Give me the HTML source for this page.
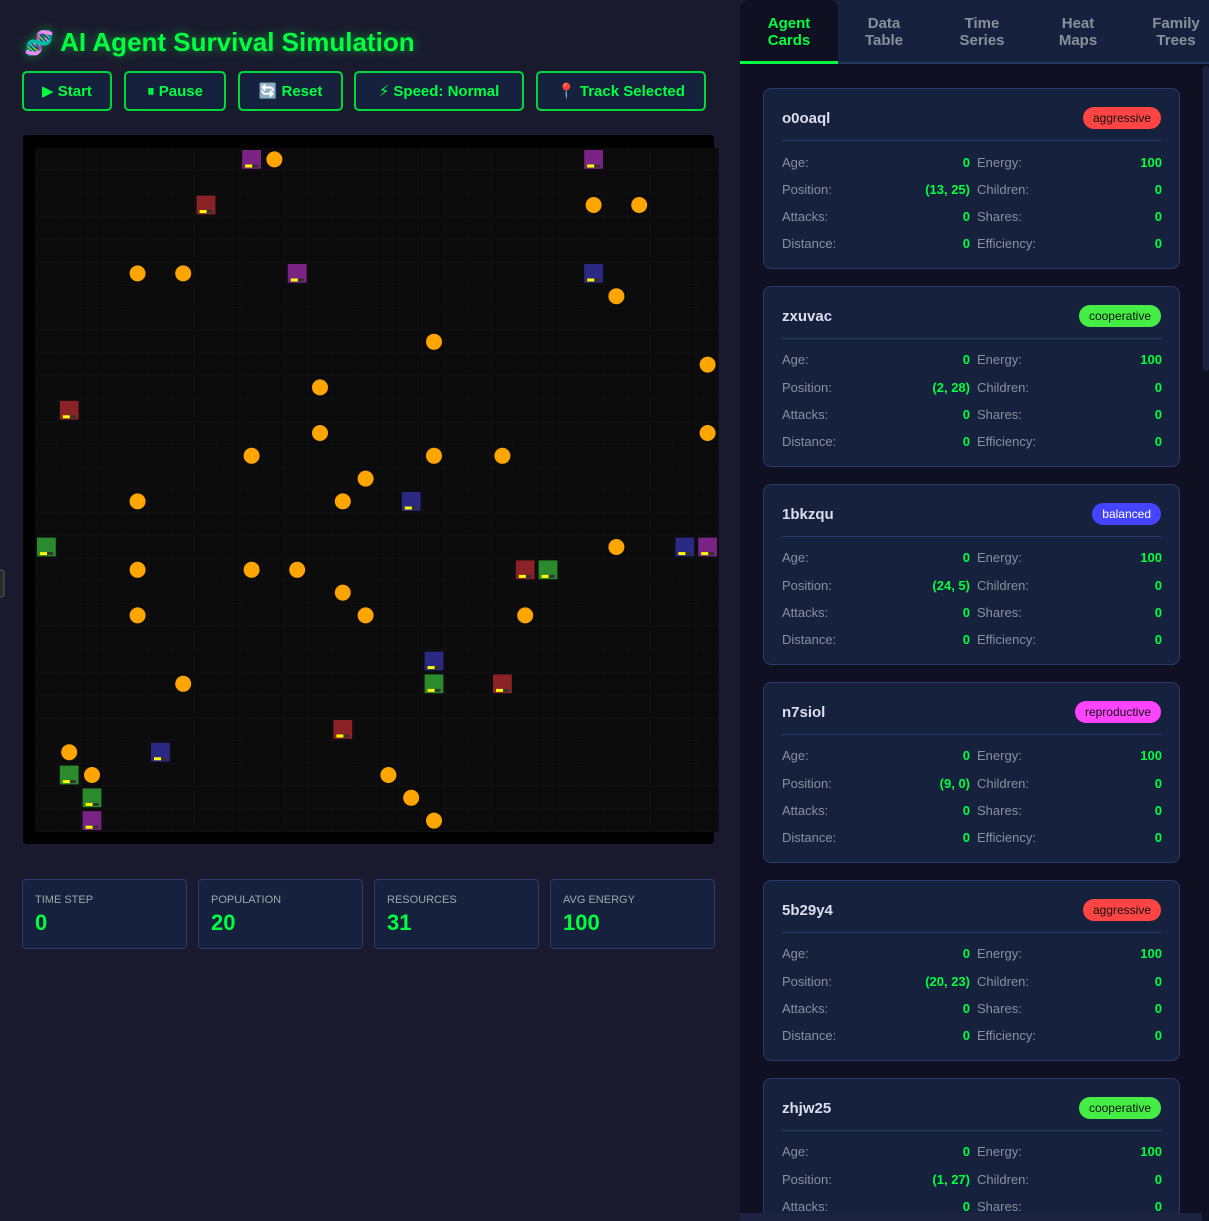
<!DOCTYPE html>
<html><head><meta charset="utf-8"><style>
*{box-sizing:border-box;margin:0;padding:0}
body{width:1209px;height:1221px;overflow:hidden;background:#1a1a2e;font-family:"Liberation Sans","DejaVu Sans",sans-serif;position:relative}
h1{position:absolute;left:24px;top:27px;font-size:26px;color:#00ff41;font-weight:bold;text-shadow:0 0 10px rgba(0,255,65,.5)}
.btn{position:absolute;top:71px;height:40px;border:2px solid #00d83a;border-radius:5px;background:#16213e;color:#00ff41;font-weight:bold;font-size:15px;display:flex;align-items:center;justify-content:center;gap:8px}
.canvas{position:absolute;left:23px;top:135px;width:691px;height:709px;background:#000;border-radius:4px}
svg.grid{position:absolute;left:0;top:0}
.stat{position:absolute;top:879px;height:70px;width:165px;background:#16213e;border:1px solid #2a3a6a;border-radius:4px;padding:14px 12px}
.stat .l{font-size:11px;color:#9aa;text-transform:uppercase}
.stat .v{font-size:22px;color:#00ff41;font-weight:bold;margin-top:4px}
.side{position:absolute;left:740px;top:0;width:469px;height:1221px;background:#0f1022;overflow:hidden}
.tabs{position:absolute;left:0;top:0;width:469px;height:64px;background:#16213e;border-bottom:2px solid #233660}
.tab{position:absolute;top:15px;text-align:center;font-size:15px;font-weight:bold;color:#8a8f9c;line-height:17px}
.tab.act{color:#00ff41;background:#0f1022;top:0;height:64px;padding-top:15px;width:98px;left:0;border-radius:8px 8px 0 0;border-bottom:3px solid #00ff41}
.card{position:absolute;left:23px;width:417px;height:181px;background:#16213e;border:1px solid #2a3a6a;border-radius:8px;padding:0 18px}
.card .nm{position:absolute;left:18px;top:21px;font-size:15px;font-weight:bold;color:#dde}
.badge{position:absolute;right:18px;top:18px;height:22px;border-radius:11px;padding:0 10px;font-size:12px;line-height:22px}
.card hr{position:absolute;left:18px;right:18px;top:51px;border:0;border-top:1px solid #2a3a6a}
.row{position:absolute;left:18px;width:380px;font-size:13px;color:#8a8f9c}
.row span{position:absolute}
.g{color:#00ff41;font-weight:bold}
</style></head><body>
<h1><span style="font-size:24px">🧬</span> AI Agent Survival Simulation</h1>
<div class="btn" style="left:22px;width:90px">▶ Start</div>
<div class="btn" style="left:124px;width:102px">⏸ Pause</div>
<div class="btn" style="left:238px;width:105px">🔄 Reset</div>
<div class="btn" style="left:354px;width:170px">⚡ Speed: Normal</div>
<div class="btn" style="left:536px;width:170px">📍 Track Selected</div>
<div class="canvas"></div>
<svg class="grid" width="740" height="850">
<defs><pattern id="p" x="35" y="148" width="22.8" height="22.8" patternUnits="userSpaceOnUse"><rect width="22.8" height="22.8" fill="#0b0b0b"/><path d="M22.8 0V22.8H0" fill="none" stroke="#15151d" stroke-width="1"/></pattern>
<g id="bar"><rect x="3" y="14.5" width="13" height="3" fill="#333"/><rect x="3" y="14.5" width="7" height="3" fill="#ff0"/></g></defs>
<rect x="35" y="148" width="684" height="684" fill="url(#p)"/>
<g fill="#ffa500">
<circle cx="274.4" cy="159.4" r="8"/><circle cx="593.6" cy="205" r="8"/><circle cx="639.2" cy="205" r="8"/><circle cx="137.6" cy="273.4" r="8"/><circle cx="183.2" cy="273.4" r="8"/><circle cx="616.4" cy="296.2" r="8"/><circle cx="434" cy="341.8" r="8"/><circle cx="707.6" cy="364.6" r="8"/><circle cx="320" cy="387.4" r="8"/><circle cx="320" cy="433" r="8"/><circle cx="707.6" cy="433" r="8"/><circle cx="251.6" cy="455.8" r="8"/><circle cx="434" cy="455.8" r="8"/><circle cx="502.4" cy="455.8" r="8"/><circle cx="365.6" cy="478.6" r="8"/><circle cx="137.6" cy="501.4" r="8"/><circle cx="342.8" cy="501.4" r="8"/><circle cx="616.4" cy="547" r="8"/><circle cx="137.6" cy="569.8" r="8"/><circle cx="251.6" cy="569.8" r="8"/><circle cx="297.2" cy="569.8" r="8"/><circle cx="342.8" cy="592.6" r="8"/><circle cx="137.6" cy="615.4" r="8"/><circle cx="365.6" cy="615.4" r="8"/><circle cx="525.2" cy="615.4" r="8"/><circle cx="183.2" cy="683.8" r="8"/><circle cx="69.2" cy="752.2" r="8"/><circle cx="92" cy="775" r="8"/><circle cx="388.4" cy="775" r="8"/><circle cx="411.2" cy="797.8" r="8"/><circle cx="434" cy="820.6" r="8"/>
</g>
<g>
<g transform="translate(242.2,150)"><rect width="18.8" height="18.8" fill="#7b2384"/><use href="#bar"/></g>
<g transform="translate(584.2,150)"><rect width="18.8" height="18.8" fill="#7b2384"/><use href="#bar"/></g>
<g transform="translate(196.6,195.6)"><rect width="18.8" height="18.8" fill="#8b2326"/><use href="#bar"/></g>
<g transform="translate(287.8,264)"><rect width="18.8" height="18.8" fill="#7b2384"/><use href="#bar"/></g>
<g transform="translate(584.2,264)"><rect width="18.8" height="18.8" fill="#2a2a85"/><use href="#bar"/></g>
<g transform="translate(59.8,400.8)"><rect width="18.8" height="18.8" fill="#8b2326"/><use href="#bar"/></g>
<g transform="translate(401.8,492)"><rect width="18.8" height="18.8" fill="#2a2a85"/><use href="#bar"/></g>
<g transform="translate(37,537.6)"><rect width="18.8" height="18.8" fill="#2b8a2b"/><use href="#bar"/></g>
<g transform="translate(675.4,537.6)"><rect width="18.8" height="18.8" fill="#2a2a85"/><use href="#bar"/></g>
<g transform="translate(698.2,537.6)"><rect width="18.8" height="18.8" fill="#7b2384"/><use href="#bar"/></g>
<g transform="translate(515.8,560.4)"><rect width="18.8" height="18.8" fill="#8b2326"/><use href="#bar"/></g>
<g transform="translate(538.6,560.4)"><rect width="18.8" height="18.8" fill="#2b8a2b"/><use href="#bar"/></g>
<g transform="translate(424.6,651.6)"><rect width="18.8" height="18.8" fill="#2a2a85"/><use href="#bar"/></g>
<g transform="translate(424.6,674.4)"><rect width="18.8" height="18.8" fill="#2b8a2b"/><use href="#bar"/></g>
<g transform="translate(493,674.4)"><rect width="18.8" height="18.8" fill="#8b2326"/><use href="#bar"/></g>
<g transform="translate(333.4,720)"><rect width="18.8" height="18.8" fill="#8b2326"/><use href="#bar"/></g>
<g transform="translate(151,742.8)"><rect width="18.8" height="18.8" fill="#2a2a85"/><use href="#bar"/></g>
<g transform="translate(59.8,765.6)"><rect width="18.8" height="18.8" fill="#2b8a2b"/><use href="#bar"/></g>
<g transform="translate(82.6,788.4)"><rect width="18.8" height="18.8" fill="#2b8a2b"/><use href="#bar"/></g>
<g transform="translate(82.6,811.2)"><rect width="18.8" height="18.8" fill="#7b2384"/><use href="#bar"/></g>
</g>
<rect x="-4" y="570" width="8" height="27" rx="3" fill="#2a2a2a" stroke="#555"/>
</svg>
<div class="stat" style="left:22px"><div class="l">Time Step</div><div class="v">0</div></div>
<div class="stat" style="left:198px"><div class="l">Population</div><div class="v">20</div></div>
<div class="stat" style="left:374px"><div class="l">Resources</div><div class="v">31</div></div>
<div class="stat" style="left:550px"><div class="l">Avg Energy</div><div class="v">100</div></div>

<div class="side">
<div class="tabs">
<div class="tab act">Agent<br>Cards</div>
<div class="tab" style="left:118px;width:52px">Data<br>Table</div>
<div class="tab" style="left:214px;width:56px">Time<br>Series</div>
<div class="tab" style="left:312px;width:52px">Heat<br>Maps</div>
<div class="tab" style="left:408px;width:56px">Family<br>Trees</div>
</div>
<div style="position:absolute;left:463px;top:66px;width:6px;height:305px;background:#1c2340;border-radius:3px"></div>

<div class="card" style="top:88px"><div class="nm">o0oaql</div><div class="badge" style="background:#ff4444;color:#111">aggressive</div><hr>
<div class="row" style="top:66px"><span style="left:0">Age:</span><span class="g" style="right:192px">0</span><span style="left:195px">Energy:</span><span class="g" style="right:0">100</span></div>
<div class="row" style="top:93px"><span style="left:0">Position:</span><span class="g" style="right:192px">(13, 25)</span><span style="left:195px">Children:</span><span class="g" style="right:0">0</span></div>
<div class="row" style="top:120px"><span style="left:0">Attacks:</span><span class="g" style="right:192px">0</span><span style="left:195px">Shares:</span><span class="g" style="right:0">0</span></div>
<div class="row" style="top:147px"><span style="left:0">Distance:</span><span class="g" style="right:192px">0</span><span style="left:195px">Efficiency:</span><span class="g" style="right:0">0</span></div></div>

<div class="card" style="top:286px"><div class="nm">zxuvac</div><div class="badge" style="background:#44ee44;color:#111">cooperative</div><hr>
<div class="row" style="top:65px"><span style="left:0">Age:</span><span class="g" style="right:192px">0</span><span style="left:195px">Energy:</span><span class="g" style="right:0">100</span></div>
<div class="row" style="top:93px"><span style="left:0">Position:</span><span class="g" style="right:192px">(2, 28)</span><span style="left:195px">Children:</span><span class="g" style="right:0">0</span></div>
<div class="row" style="top:120px"><span style="left:0">Attacks:</span><span class="g" style="right:192px">0</span><span style="left:195px">Shares:</span><span class="g" style="right:0">0</span></div>
<div class="row" style="top:147px"><span style="left:0">Distance:</span><span class="g" style="right:192px">0</span><span style="left:195px">Efficiency:</span><span class="g" style="right:0">0</span></div></div>

<div class="card" style="top:484px"><div class="nm">1bkzqu</div><div class="badge" style="background:#4444ff;color:#fff">balanced</div><hr>
<div class="row" style="top:65px"><span style="left:0">Age:</span><span class="g" style="right:192px">0</span><span style="left:195px">Energy:</span><span class="g" style="right:0">100</span></div>
<div class="row" style="top:93px"><span style="left:0">Position:</span><span class="g" style="right:192px">(24, 5)</span><span style="left:195px">Children:</span><span class="g" style="right:0">0</span></div>
<div class="row" style="top:120px"><span style="left:0">Attacks:</span><span class="g" style="right:192px">0</span><span style="left:195px">Shares:</span><span class="g" style="right:0">0</span></div>
<div class="row" style="top:147px"><span style="left:0">Distance:</span><span class="g" style="right:192px">0</span><span style="left:195px">Efficiency:</span><span class="g" style="right:0">0</span></div></div>

<div class="card" style="top:682px"><div class="nm">n7siol</div><div class="badge" style="background:#ff44ff;color:#111">reproductive</div><hr>
<div class="row" style="top:65px"><span style="left:0">Age:</span><span class="g" style="right:192px">0</span><span style="left:195px">Energy:</span><span class="g" style="right:0">100</span></div>
<div class="row" style="top:93px"><span style="left:0">Position:</span><span class="g" style="right:192px">(9, 0)</span><span style="left:195px">Children:</span><span class="g" style="right:0">0</span></div>
<div class="row" style="top:120px"><span style="left:0">Attacks:</span><span class="g" style="right:192px">0</span><span style="left:195px">Shares:</span><span class="g" style="right:0">0</span></div>
<div class="row" style="top:147px"><span style="left:0">Distance:</span><span class="g" style="right:192px">0</span><span style="left:195px">Efficiency:</span><span class="g" style="right:0">0</span></div></div>

<div class="card" style="top:880px"><div class="nm">5b29y4</div><div class="badge" style="background:#ff4444;color:#111">aggressive</div><hr>
<div class="row" style="top:65px"><span style="left:0">Age:</span><span class="g" style="right:192px">0</span><span style="left:195px">Energy:</span><span class="g" style="right:0">100</span></div>
<div class="row" style="top:93px"><span style="left:0">Position:</span><span class="g" style="right:192px">(20, 23)</span><span style="left:195px">Children:</span><span class="g" style="right:0">0</span></div>
<div class="row" style="top:120px"><span style="left:0">Attacks:</span><span class="g" style="right:192px">0</span><span style="left:195px">Shares:</span><span class="g" style="right:0">0</span></div>
<div class="row" style="top:147px"><span style="left:0">Distance:</span><span class="g" style="right:192px">0</span><span style="left:195px">Efficiency:</span><span class="g" style="right:0">0</span></div></div>

<div class="card" style="top:1078px;height:181px"><div class="nm">zhjw25</div><div class="badge" style="background:#44ee44;color:#111">cooperative</div><hr>
<div class="row" style="top:65px"><span style="left:0">Age:</span><span class="g" style="right:192px">0</span><span style="left:195px">Energy:</span><span class="g" style="right:0">100</span></div>
<div class="row" style="top:93px"><span style="left:0">Position:</span><span class="g" style="right:192px">(1, 27)</span><span style="left:195px">Children:</span><span class="g" style="right:0">0</span></div>
<div class="row" style="top:120px"><span style="left:0">Attacks:</span><span class="g" style="right:192px">0</span><span style="left:195px">Shares:</span><span class="g" style="right:0">0</span></div></div>
<div style="position:absolute;left:0;top:1213px;width:462px;height:8px;background:#1c2340"></div>
</div>
</body></html>
